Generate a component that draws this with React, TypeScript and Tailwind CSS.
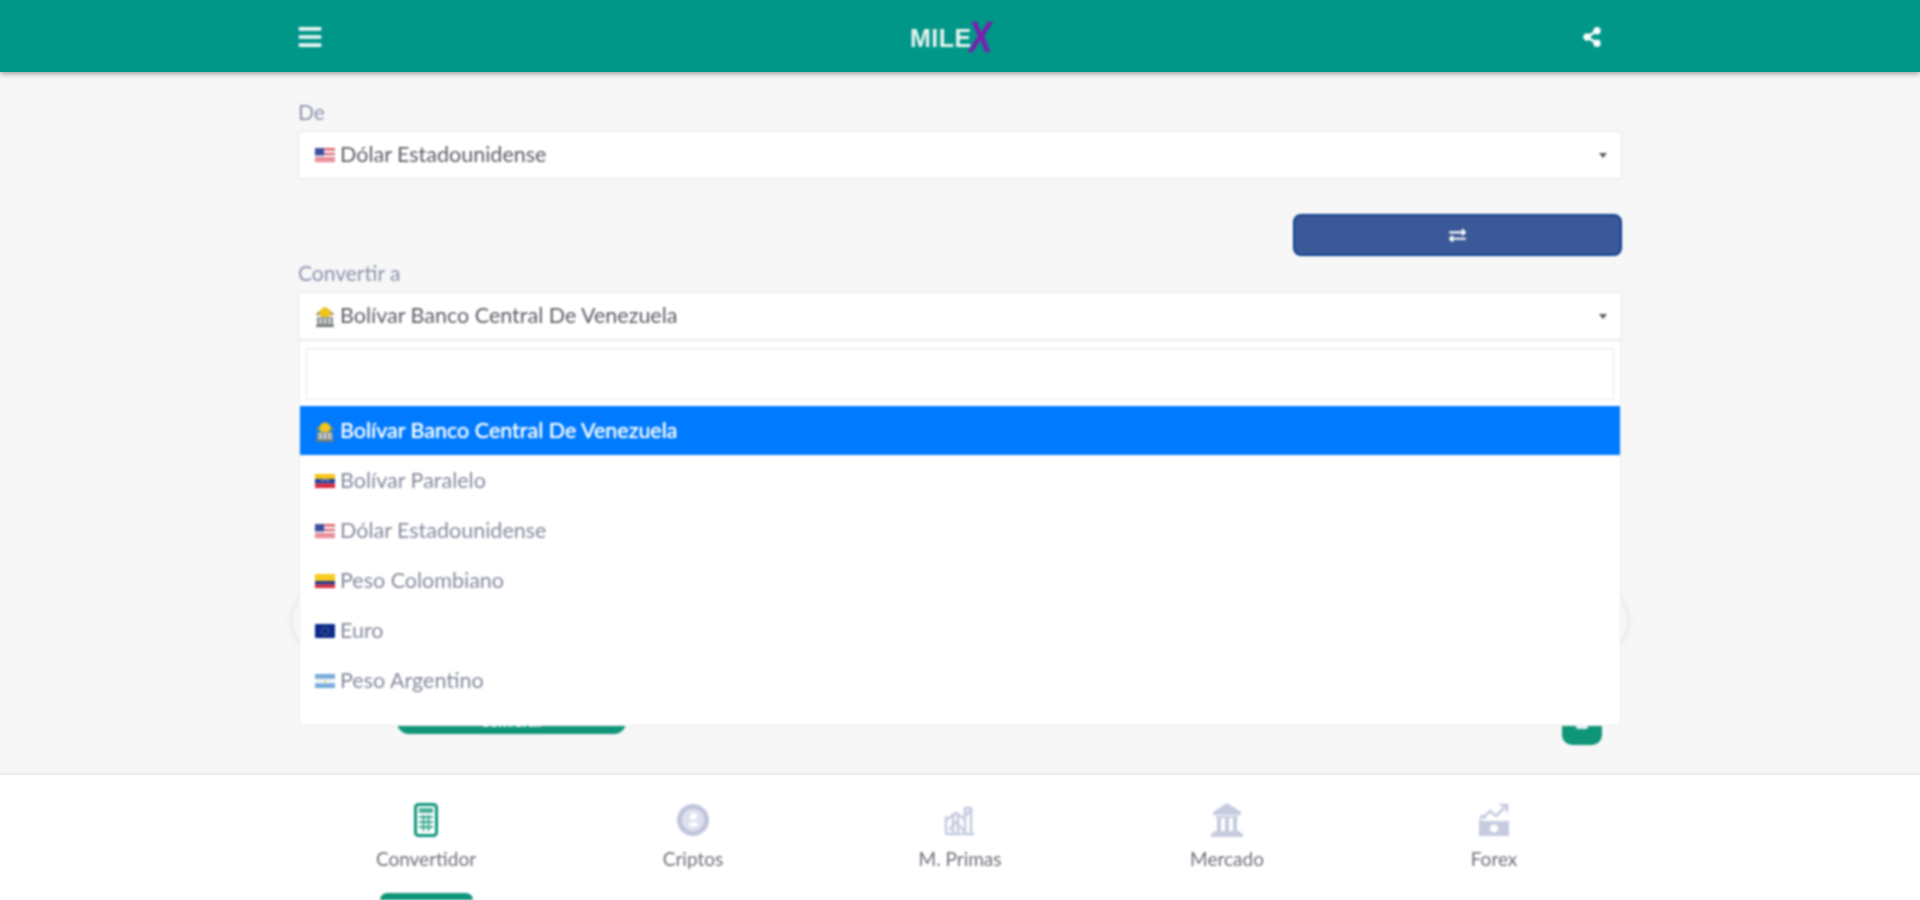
import React from "react";
import { FaBars, FaShareAlt, FaExchangeAlt } from "react-icons/fa";

const Us = () => (
  <svg width="20" height="14" viewBox="0 0 20 14" className="shrink-0">
    <rect width="20" height="14" fill="#f3f3f6" />
    <rect y="0" width="20" height="2.5" fill="#e4606d" />
    <rect y="5" width="20" height="2" fill="#e4606d" />
    <rect y="9.5" width="20" height="2" fill="#e4606d" />
    <rect y="12.5" width="20" height="1.5" fill="#e4606d" />
    <rect width="9" height="7.5" fill="#3c4f9c" />
  </svg>
);
const Ve = () => (
  <svg width="20" height="14" viewBox="0 0 20 14" className="shrink-0">
    <rect width="20" height="5" fill="#f5c518" />
    <rect y="5" width="20" height="4.5" fill="#1f3f9e" />
    <rect y="9.5" width="20" height="4.5" fill="#d8283c" />
    <circle cx="7" cy="6.5" r=".8" fill="#fff" />
    <circle cx="10" cy="6" r=".8" fill="#fff" />
    <circle cx="13" cy="6.5" r=".8" fill="#fff" />
  </svg>
);
const Co = () => (
  <svg width="20" height="14" viewBox="0 0 20 14" className="shrink-0">
    <rect width="20" height="7" fill="#f7cc1e" />
    <rect y="7" width="20" height="3.5" fill="#24348f" />
    <rect y="10.5" width="20" height="3.5" fill="#d8283c" />
  </svg>
);
const Eu = () => (
  <svg width="20" height="14" viewBox="0 0 20 14" className="shrink-0">
    <rect width="20" height="14" rx="1" fill="#0b2a8c" />
    <circle cx="10" cy="7" r="3.6" fill="none" stroke="#d8c94a" strokeWidth="1" strokeDasharray="1 1.2" />
  </svg>
);
const Ar = () => (
  <svg width="20" height="14" viewBox="0 0 20 14" className="shrink-0">
    <rect width="20" height="14" fill="#75aadb" />
    <rect y="4.7" width="20" height="4.6" fill="#f4f6f8" />
    <circle cx="10" cy="7" r="1.2" fill="#e5c568" />
  </svg>
);
const Bank = () => (
  <svg width="20" height="22" viewBox="0 0 20 22" className="shrink-0">
    <path d="M1 9 10 2l9 7v1H1z" fill="#9a8f5a" />
    <circle cx="10" cy="8" r="5.500" fill="#f0c419" />
    <rect x="2" y="12" width="16" height="8" fill="#8d9493" />
    <rect x="4.500" y="13" width="2" height="6" fill="#d9dedd" />
    <rect x="9" y="13" width="2" height="6" fill="#d9dedd" />
    <rect x="13.500" y="13" width="2" height="6" fill="#d9dedd" />
    <rect x="1" y="20" width="18" height="2" fill="#6f7675" />
  </svg>
);

const Calculator = () => (
  <svg width="24" height="34" viewBox="0 0 24 34" fill="none">
    <rect x="1.500" y="1.500" width="21" height="31" rx="3" stroke="#0f9678" strokeWidth="3" />
    <rect x="5" y="5" width="14" height="5" fill="#0f9678" opacity=".75" />
    <path d="M5 14h14M5 19h14M5 24h14M9.500 12v16M14.500 12v16" stroke="#0f9678" strokeWidth="2" opacity=".8" />
  </svg>
);
const Coin = () => (
  <svg width="32" height="34" viewBox="0 0 32 34" fill="none">
    <circle cx="16" cy="17" r="13.500" fill="#dfe2ee" stroke="#c0c5db" strokeWidth="5" />
    <circle cx="16.500" cy="13.500" r="3.500" fill="#fff" />
    <path d="M11 22c3-4 8-4 11 0-3 2-8 2-11 0z" fill="#fff" />
  </svg>
);
const Primas = () => (
  <svg width="32" height="32" viewBox="0 0 32 32" fill="none" stroke="#c6cbdf" strokeWidth="2.500">
    <path d="M2 30V12M9 30V10h5v20M21 30V4h6v26" strokeLinejoin="round" />
    <path d="M2 16 12 9l7 5 9-9M2 30h28M5 26l7-8 8 9" />
  </svg>
);
const Temple = () => (
  <svg width="32" height="34" viewBox="0 0 32 34" fill="#c6cbdf">
    <path d="M16 0l14 9v3H2V9z" />
    <rect x="5" y="13" width="22" height="2" />
    <rect x="6" y="15" width="4" height="13" />
    <rect x="14" y="15" width="4" height="13" />
    <rect x="22" y="15" width="4" height="13" />
    <rect x="3" y="28" width="26" height="2" />
    <rect x="0" y="30" width="32" height="4" />
  </svg>
);
const Forex = () => (
  <svg width="34" height="34" viewBox="0 0 34 34" fill="none">
    <path d="M6 15 13 8l6 5L29 3" stroke="#c6cbdf" strokeWidth="2.500" />
    <path d="M23 2h7v7" stroke="#c6cbdf" strokeWidth="2.500" />
    <rect x="2" y="18" width="30" height="15" fill="#c6cbdf" />
    <circle cx="17" cy="25.500" r="4" fill="#fff" />
    <path d="M4 16v-3h4v3M2 18h4" stroke="#c6cbdf" strokeWidth="2" />
  </svg>
);

const options = [
  { flag: <Ve />, name: "Bolívar Paralelo" },
  { flag: <Us />, name: "Dólar Estadounidense" },
  { flag: <Co />, name: "Peso Colombiano" },
  { flag: <Eu />, name: "Euro" },
  { flag: <Ar />, name: "Peso Argentino" },
];

const Caret = () => (
  <span className="ml-auto h-0 w-0 border-x-[4px] border-t-[5px] border-x-transparent border-t-[#555]" />
);

const Select = ({ icon, name }: { icon: React.ReactNode; name: string }) => (
  <div className="flex h-[48px] items-center gap-[5px] border border-[#e9e9e9] bg-white pl-[16px] pr-[14px] text-[21.5px] leading-none text-[#5a5d66]">
    {icon}
    <span>{name}</span>
    <Caret />
  </div>
);

const tabs = [
  { label: "Convertidor", icon: <Calculator />, active: true },
  { label: "Criptos", icon: <Coin /> },
  { label: "M. Primas", icon: <Primas /> },
  { label: "Mercado", icon: <Temple /> },
  { label: "Forex", icon: <Forex /> },
];

export default function App() {
  return (
    <div className="flex h-[900px] flex-col overflow-hidden bg-[#f7f7f7] font-['Lato','Liberation_Sans',sans-serif]">
      <header className="relative z-20 h-[72px] shrink-0 bg-[#009688] shadow-[0_2px_5px_rgba(0,0,0,0.35)]">
        <div className="mx-auto flex h-full w-[1324px] items-center justify-between pr-[20px] pt-[2px] blur-[1px]">
          <FaBars size={26} color="#eef7f5" className="-ml-[1px]" />
          <div className="flex items-center font-['Liberation_Sans',sans-serif] font-bold">
            <span className="mt-[3px] text-[25px] leading-none tracking-[0.5px] text-[#e6f3f0]">MILE</span>
            <span className="-ml-[6px] inline-block origin-center scale-x-[0.8] skew-x-[-8deg] text-[44px] leading-none text-[#7a1fb0]">X</span>
          </div>
          <FaShareAlt size={20} color="#fff" />
        </div>
      </header>

      <main className="relative min-h-0 flex-1">
        <div className="mx-auto w-[1324px] pt-[28px] blur-[1px]">
          <label className="block h-[31px] text-[21px] leading-[24px] text-[#8d92ac]">De</label>
          <Select icon={<Us />} name="Dólar Estadounidense" />
          <div className="mt-[35px] flex justify-end">
            <button className="flex h-[42px] w-[329px] items-center justify-center rounded-[8px] border-2 border-[#0d3f8f] bg-[#3b5998] text-white">
              <FaExchangeAlt size={17} />
            </button>
          </div>
          <label className="mt-[5px] block h-[31px] text-[21px] leading-[24px] text-[#8d92ac]">Convertir a</label>
          <div className="relative">
            <Select icon={<Bank />} name="Bolívar Banco Central De Venezuela" />
            <div className="absolute left-[1px] right-[1px] top-full z-10 h-[386px] overflow-hidden border border-[#ececec] bg-white">
              <div className="px-[6px] pt-[7px]">
                <div className="h-[52px] border border-[#e6e6e6] bg-white" />
              </div>
              <div className="mt-[6px] flex h-[49px] items-center gap-[5px] bg-[#007bff] pl-[15px] text-[21.5px] leading-none text-white [text-shadow:0_0_1px_#fff]">
                <Bank />
                <span>Bolívar Banco Central De Venezuela</span>
              </div>
              {options.map((o) => (
                <div key={o.name} className="flex h-[50px] items-center gap-[5px] pl-[15px] pt-[1px] text-[21.5px] leading-none text-[#858a9c]">
                  {o.flag}
                  <span>{o.name}</span>
                </div>
              ))}
            </div>
          </div>

          <div className="-mx-[5px] mt-[251px] h-[60px] rounded-[30px] bg-[#f7f7f7] shadow-[0_0_10px_rgba(0,0,0,0.12)]" />
          <div className="mt-[51px] flex items-start pl-[20px] pr-[20px]">
            <div className="flex w-[79px] items-center gap-[5px] pt-[8px] text-[18px] leading-none text-[#858a9c]">
              <Us />
              <span>Dólar</span>
            </div>
            <div className="flex h-[32px] w-[229px] items-center justify-center rounded-[12px] bg-[#0f9678] pt-[6px] text-[15px] font-bold text-white">
              Convertir
            </div>
            <div className="ml-auto mt-[3px] flex h-[40px] w-[40px] items-start justify-center rounded-[10px] bg-[#0f9678] pt-[16px]">
              <span className="h-[8px] w-[12px] rounded-[2px] bg-[#e6f3f0]" />
            </div>
          </div>
        </div>
      </main>

      <nav className="relative z-20 h-[125px] shrink-0 bg-white shadow-[0_-1px_4px_rgba(0,0,0,0.08)]">
        <div className="mx-auto grid h-full w-[1335px] grid-cols-5 blur-[1px]">
          {tabs.map((t) => (
            <div key={t.label} className="flex flex-col items-center">
              <div className="mt-[28px] flex h-[34px] items-center justify-center">{t.icon}</div>
              <span className="mt-[10px] text-[19px] leading-[24px] text-[#6d707a]">{t.label}</span>
              {t.active && <span className="mt-auto h-[7px] w-[93px] rounded-t-[8px] bg-[#0f9678]" />}
            </div>
          ))}
        </div>
      </nav>
    </div>
  );
}
